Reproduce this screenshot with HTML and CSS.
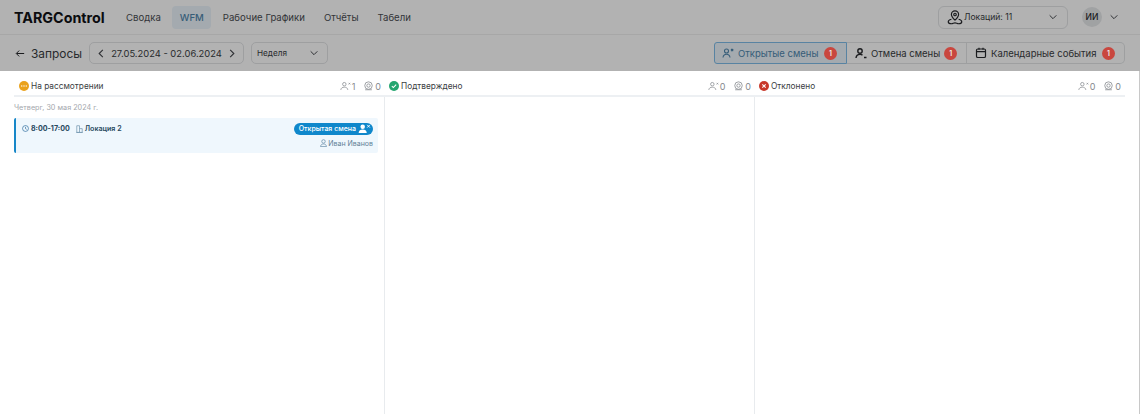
FILE: index.html
```html
<!DOCTYPE html>
<html>
<head>
	<title>TARGControl</title>
	<meta charset="utf-8">
	<link rel="stylesheet" href="styles.css">
</head>
<body>
	<div class="top">
		<div class="nav">
			<div class="logo">TARGControl</div>
			<div class="menu">
				<a>Сводка</a>
				<a class="active">WFM</a>
				<a>Рабочие Графики</a>
				<a>Отчёты</a>
				<a>Табели</a>
			</div>
			<div class="location">
				<svg width="18" height="18" viewBox="0 0 20 20" fill="none" stroke="#26282c" stroke-width="1.300"><path d="M10 13.500c-2.600-2.400-4-4.400-4-6.300a4 4 0 0 1 8 0c0 1.900-1.400 3.900-4 6.300z"/><circle cx="10" cy="7.200" r="1.400"/><path d="M6 12.500c-2 .5-3.500 1.400-3.500 2.700 0 1.600 2 2.300 3.500 2.300 1.600 0 2.500-1 4-1s2.400 1 4 1c1.500 0 3.500-.7 3.500-2.300 0-1.300-1.500-2.200-3.500-2.700"/></svg>
				<span>Локаций: 11</span>
				<svg class="chev" width="10" height="10" viewBox="0 0 12 12"><path d="M2 4l4 4 4-4"/></svg>
			</div>
			<div class="avatar">ИИ</div>
			<svg class="chev" width="10" height="10" viewBox="0 0 12 12"><path d="M2 4l4 4 4-4"/></svg>
		</div>
		<div class="toolbar">
			<svg class="back" width="10" height="9" viewBox="0 0 12 10"><path d="M11 5H2M5 1.500L1.500 5 5 8.500"/></svg>
			<div class="page_title">Запросы</div>
			<div class="dates">
				<svg class="chev" width="10" height="11" viewBox="0 0 10 12"><path d="M7 2L3 6l4 4"/></svg>
				<span>27.05.2024 - 02.06.2024</span>
				<svg class="chev" width="10" height="11" viewBox="0 0 10 12"><path d="M3 2l4 4-4 4"/></svg>
			</div>
			<div class="period">
				<span>Неделя</span>
				<svg class="chev" width="10" height="10" viewBox="0 0 12 12"><path d="M2 4l4 4 4-4"/></svg>
			</div>
			<div class="tabs">
				<div class="tab selected">
					<svg width="14" height="14" viewBox="0 0 14 14" fill="none" stroke="#4f86ad" stroke-width="1.100"><circle cx="5.500" cy="5" r="2"/><path d="M2 11.500c.3-2.200 1.600-3.200 3.500-3.200s3.200 1 3.500 3.200M10 3l2.200 2.200M12.200 3L10 5.200"/></svg>
					<span>Открытые смены</span><b>1</b>
				</div>
				<div class="tab">
					<svg width="14" height="14" viewBox="0 0 14 14" fill="none" stroke="#26282c" stroke-width="1.400"><circle cx="6" cy="5" r="2.200"/><path d="M2 12c.3-2.500 1.800-3.600 4-3.600 1 0 1.800.2 2.500.7M10 11.500h2.500"/></svg>
					<span>Отмена смены</span><b>1</b>
				</div>
				<div class="tab">
					<svg width="14" height="14" viewBox="0 0 14 14" fill="none" stroke="#26282c" stroke-width="1.200"><rect x="2.500" y="3" width="9" height="8.500" rx="1.300"/><path d="M2.500 5.700h9M5 1.800v2M9 1.800v2"/></svg>
					<span>Календарные события</span><b>1</b>
				</div>
			</div>
		</div>
		<div class="dim"></div>
	</div>

	<div class="board">
		<div class="column">
			<div class="col_head">
				<span class="dot orange"><svg viewBox="0 0 12 12" fill="#fff"><circle cx="3.300" cy="6" r=".8"/><circle cx="6" cy="6" r=".8"/><circle cx="8.700" cy="6" r=".8"/></svg></span>
				<span class="col_name">На рассмотрении</span>
				<span class="stat"><svg viewBox="0 0 14 12" fill="none" stroke="#8b8f94"><circle cx="5.500" cy="3.700" r="2.200"/><path d="M1 11c.3-2.400 2-3.500 4.500-3.500S9.700 8.600 10 11M11 2l2 2M13 2l-2 2"/></svg>1</span>
				<span class="stat"><svg viewBox="0 0 12 12" fill="none" stroke="#8b8f94"><circle cx="6" cy="5.500" r="4.500"/><circle cx="6" cy="5.500" r="2"/><path d="M2 10.500h8"/></svg>0</span>
			</div>
			<div class="col_body">
				<div class="day">Четверг, 30 мая 2024 г.</div>
				<div class="card">
					<div class="card_top">
						<svg width="7" height="7" viewBox="0 0 9 9" fill="none" stroke="#2f6f9f" stroke-width=".9"><circle cx="4.500" cy="4.500" r="3.800"/><path d="M4.500 2.400v2.300l1.500 .9"/></svg>
						<span class="time">8:00-17:00</span>
						<svg class="bld" width="7" height="8" viewBox="0 0 9 10" fill="none" stroke="#6f93ad" stroke-width=".9"><path d="M1 9.400V.800h3.500v8.600zM4.500 4.500h3.500v4.900H4.500M.300 9.400h8.400"/></svg>
						<span class="place">Локация 2</span>
						<span class="pill">Открытая смена <svg width="13" height="9" viewBox="0 0 14 10" fill="#fff"><circle cx="5" cy="3" r="2.500"/><path d="M.5 10c0-3 2-4 4.500-4s4.500 1 4.500 4z"/><path d="M10 1l3 3M13 1l-3 3" stroke="#fff" fill="none"/></svg></span>
					</div>
					<div class="person">
						<svg width="7" height="8" viewBox="0 0 8 9" fill="none" stroke="#6f93ad" stroke-width=".9"><circle cx="4" cy="2.700" r="2"/><path d="M.6 8.600c.2-2 1.500-3 3.400-3s3.200 1 3.400 3z"/></svg>
						Иван Иванов
					</div>
				</div>
			</div>
		</div>
		<div class="column">
			<div class="col_head">
				<span class="dot green"><svg viewBox="0 0 12 12" fill="none" stroke="#fff" stroke-width="1.300"><path d="M3.400 6.200l1.800 1.700 3.400-3.600"/></svg></span>
				<span class="col_name">Подтверждено</span>
				<span class="stat"><svg viewBox="0 0 14 12" fill="none" stroke="#8b8f94"><circle cx="5.500" cy="3.700" r="2.200"/><path d="M1 11c.3-2.400 2-3.500 4.500-3.500S9.700 8.600 10 11M11 2l2 2M13 2l-2 2"/></svg>0</span>
				<span class="stat"><svg viewBox="0 0 12 12" fill="none" stroke="#8b8f94"><circle cx="6" cy="5.500" r="4.500"/><circle cx="6" cy="5.500" r="2"/><path d="M2 10.500h8"/></svg>0</span>
			</div>
			<div class="col_body"></div>
		</div>
		<div class="column">
			<div class="col_head">
				<span class="dot red"><svg viewBox="0 0 12 12" fill="none" stroke="#fff" stroke-width="1.300"><path d="M4 4l4 4M8 4l-4 4"/></svg></span>
				<span class="col_name">Отклонено</span>
				<span class="stat"><svg viewBox="0 0 14 12" fill="none" stroke="#8b8f94"><circle cx="5.500" cy="3.700" r="2.200"/><path d="M1 11c.3-2.400 2-3.500 4.500-3.500S9.700 8.600 10 11M11 2l2 2M13 2l-2 2"/></svg>0</span>
				<span class="stat"><svg viewBox="0 0 12 12" fill="none" stroke="#8b8f94"><circle cx="6" cy="5.500" r="4.500"/><circle cx="6" cy="5.500" r="2"/><path d="M2 10.500h8"/></svg>0</span>
			</div>
			<div class="col_body"></div>
		</div>
	</div>
</body>
</html>
```

FILE: styles.css
```css
* {
	box-sizing: border-box;
}
html, body {
	height: 100%;
}
body {
	margin: 0;
	overflow: hidden;
	display: flex;
	flex-direction: column;
	font-family: "Inter", "Noto Sans", sans-serif;
	color: #26282c;
	background-color: white;
}
svg {
	flex: none;
}
.chev {
	fill: none;
	stroke: #44474c;
	stroke-width: 1.2;
}

.top {
	position: relative;
	height: 71px;
	flex: none;
	background-color: white;
}
.dim {
	position: absolute;
	top: 0;
	left: 0;
	right: 0;
	bottom: 0;
	background-color: rgba(0, 0, 0, 0.3);
}

.nav {
	height: 35px;
	padding: 0 21px 0 14px;
	display: flex;
	align-items: center;
	border-bottom: 1px solid #f0f0f0;
}
.logo {
	width: 104.5px;
	font-size: 14.3px;
	font-weight: 700;
	color: #101216;
}
.menu {
	display: flex;
	align-items: center;
	gap: 4px;
	flex: 1;
	font-size: 9.6px;
	color: #4a4d52;
}
.menu a {
	padding: 0 7.5px;
	height: 23px;
	line-height: 23px;
	border-radius: 4px;
}
.menu .active {
	background-color: #ebf4fb;
	color: #4f86ad;
	font-weight: 500;
}
.location {
	width: 130px;
	height: 23px;
	padding: 0 9px 0 7px;
	margin-right: 14px;
	display: flex;
	align-items: center;
	gap: 0;
	border: 1px solid #e2e4e6;
	border-radius: 6px;
	font-size: 8.6px;
	color: #3a3d42;
}
.location span {
	flex: 1;
}
.avatar {
	width: 20px;
	height: 20px;
	margin-right: 7px;
	display: flex;
	align-items: center;
	justify-content: center;
	border-radius: 50%;
	background-color: #e6e8ea;
	font-size: 8.5px;
	font-weight: 500;
}

.toolbar {
	height: 36px;
	padding: 0 15px;
	display: flex;
	align-items: center;
}
.back {
	fill: none;
	stroke: #26282c;
	stroke-width: 1.2;
	margin-right: 6px;
}
.page_title {
	width: 58px;
	font-size: 11.9px;
	color: #3a3d42;
}
.dates {
	width: 155px;
	height: 22px;
	margin-right: 7px;
	padding: 0 6px;
	display: flex;
	align-items: center;
	justify-content: space-between;
	border: 1px solid #e2e4e6;
	border-radius: 5px;
	font-size: 9.4px;
	white-space: nowrap;
	color: #3a3d42;
}
.period {
	width: 77px;
	height: 22px;
	padding: 0 8px 0 5px;
	display: flex;
	align-items: center;
	justify-content: space-between;
	border: 1px solid #e2e4e6;
	border-radius: 5px;
	font-size: 8.2px;
	color: #3a3d42;
}
.tabs {
	display: flex;
	margin-left: auto;
	height: 22px;
	font-size: 9.5px;
	color: #3a3d42;
}
.tab {
	display: flex;
	align-items: center;
	gap: 3px;
	padding: 0 9px 0 7px;
	border: 1px solid #e2e4e6;
	border-left: none;
	white-space: nowrap;
}
.tab span {
	flex: 1;
}
.tab:last-child {
	border-radius: 0 5px 5px 0;
}
.tab b {
	position: relative;
	z-index: 1;
	width: 13px;
	height: 13px;
	margin-left: 1px;
	display: flex;
	align-items: center;
	justify-content: center;
	border-radius: 50%;
	background-color: #c9473f;
	color: #eee;
	font-size: 7px;
	font-weight: 600;
}
.tab:nth-child(1) {
	width: 133px;
}
.tab:nth-child(2) {
	width: 120px;
}
.tab:nth-child(3) {
	width: 158px;
}
.tab.selected {
	padding-left: 6px;
	border: 1px solid #7fbce8;
	border-radius: 3px 0 0 3px;
	background-color: #ebf4fb;
	color: #4f86ad;
}

.board {
	flex: 1;
	padding: 0 15px 0 14px;
	display: flex;
	border-right: 1px solid #c8c8c8;
}
.column {
	flex: none;
	width: 370px;
	display: flex;
	flex-direction: column;
}
.column:first-child {
	width: 371px;
}
.col_head {
	height: 26px;
	padding: 6px 4px 0 4px;
	display: flex;
	align-items: center;
	gap: 2px;
	border-bottom: 2px solid #edf0f3;
	font-size: 8.3px;
	color: #3a3d42;
}
.column:first-child .col_head {
	padding-left: 5px;
}
.col_body {
	flex: 1;
	padding-right: 6px;
	border-right: 1px solid #e8ebee;
}
.column:last-child .col_body {
	border-right: none;
}
.dot {
	width: 10px;
	height: 10px;
	display: flex;
	align-items: center;
	justify-content: center;
	border-radius: 50%;
}
.dot svg {
	width: 10px;
	height: 10px;
}
.orange {
	background-color: #eaa21c;
}
.green {
	background-color: #23a56f;
}
.red {
	background-color: #c8392b;
}
.col_name {
	flex: 1;
}
.stat {
	display: flex;
	align-items: center;
	gap: 1px;
	margin-left: 6px;
	font-size: 9px;
	color: #85898e;
}
.stat svg {
	width: 11px;
	height: 10px;
}
.day {
	padding-top: 6px;
	height: 21px;
	font-size: 7.25px;
	color: #a4a8ad;
}
.card {
	height: 35px;
	padding: 4.500px 5px 0 6px;
	border-left: 2px solid #1787c8;
	border-radius: 2px;
	background-color: #eff7fd;
}
.card_top {
	display: flex;
	align-items: center;
	gap: 2px;
	font-size: 7.100px;
	font-weight: 700;
	color: #27495f;
}
.time {
	margin-right: 3px;
}
.bld {
	margin-left: 1px;
}
.place {
	flex: 1;
	font-weight: 600;
}
.pill {
	display: flex;
	align-items: center;
	gap: 2px;
	height: 12px;
	padding: 0 2px 0 5px;
	border-radius: 6px;
	background-color: #0f87cb;
	color: white;
	font-size: 7px;
	font-weight: 500;
}
.person {
	margin-top: 4px;
	display: flex;
	justify-content: flex-end;
	align-items: center;
	gap: 1px;
	font-size: 7px;
	color: #5f7f96;
}
```
